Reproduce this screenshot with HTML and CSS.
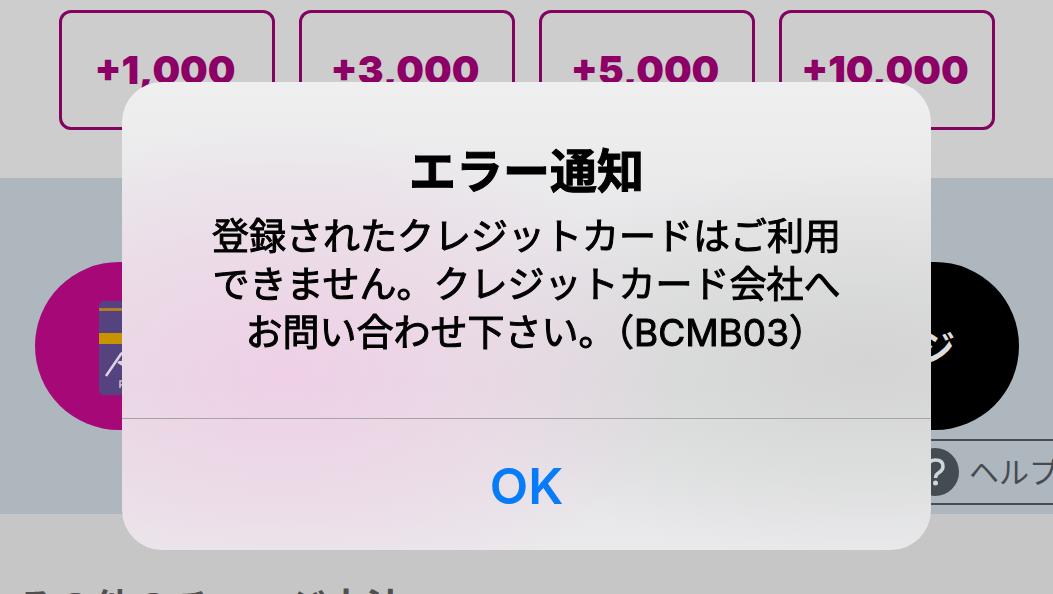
FILE: index.html
```
<!DOCTYPE html>
<html lang="ja">
<head>
    <meta charset="UTF-8">
    <meta name="viewport" content="width=device-width, initial-scale=1">
    <title>チャージ</title>
    <link rel="stylesheet" href="styles.css">
</head>
<body>
    <main>
        <section class="amounts">
            <button type="button">+1,000</button>
            <button type="button">+3,000</button>
            <button type="button">+5,000</button>
            <button type="button">+10,000</button>
        </section>
        <section class="charge">
            <div class="pills">
                <button type="button" class="pill card" aria-label="カード">
                    <svg width="148" height="94" viewBox="0 0 148 94">
                        <rect width="148" height="94" rx="5" fill="#55437f"/>
                        <rect y="7" width="148" height="3" fill="#b17d2c"/>
                        <rect y="32" width="148" height="11" fill="#c79400"/>
                        <path d="M7 75 L22 53 L28 49 M19 61 L24 64 M20 61 Q24 62 27 59" fill="none" stroke="#ded3e3" stroke-width="2.5"/>
                        <path d="M21 87 V80 H27 M21 84 H26" fill="none" stroke="#cfc3da" stroke-width="1.5"/>
                    </svg>
                </button>
                <button type="button" class="pill submit">チャージ</button>
            </div>
            <a href="#" class="help">
                <svg width="48" height="48" viewBox="0 0 48 48" aria-hidden="true">
                    <circle cx="24" cy="24" r="24" fill="#454c51"/>
                    <path d="M17 18 Q18 12 24.500 12 Q32 12 32 18.500 Q32 22 28 24.500 Q24.500 26.500 24.500 30" fill="none" stroke="#d0d6da" stroke-width="3.500"/>
                    <circle cx="24.500" cy="35" r="2.500" fill="#d0d6da"/>
                </svg>
                ヘルプ
            </a>
        </section>
        <h2>その他のチャージ方法</h2>
    </main>

    <div class="overlay">
        <div class="alert" role="alertdialog" aria-labelledby="alertTitle" aria-describedby="alertText">
            <div class="message">
                <h1 id="alertTitle">エラー通知</h1>
                <p id="alertText">登録されたクレジットカードはご利用<br>できません。クレジットカード会社へ<br>お問い合わせ下さい。（BCMB03<span class="half">）</span></p>
            </div>
            <button type="button" class="ok">OK</button>
        </div>
    </div>
</body>
</html>
```
FILE: styles.css
```
*{
    box-sizing: border-box;
}
body{
    margin: 0;
    height: 100vh;
    overflow: hidden;
    background: #c6c6c6;
    font-family: Inter, "Noto Sans CJK JP", sans-serif;
}
button{
    font-family: inherit;
    cursor: pointer;
}
.amounts{
    display: grid;
    grid-template-columns: repeat(4, 1fr);
    gap: 24px;
    padding: 10px 58px 48px 59px;
    background: #cdcdcd;
}
.amounts button{
    height: 120px;
    padding: 0 4px 2px 0;
    border: 3px solid #82045f;
    border-radius: 12px;
    background: transparent;
    color: #8d0066;
    font-size: 39px;
    font-weight: 900;
}
.charge{
    height: 336px;
    padding-top: 84px;
    background: #adb7bd;
}
.pills{
    display: grid;
    grid-template-columns: 1fr 1fr;
    gap: 24px;
    padding: 0 34px 0 35px;
}
.pill{
    display: flex;
    align-items: center;
    height: 168px;
    padding: 0 64px;
    border: none;
    border-radius: 84px;
}
.pill.card{
    padding-top: 4px;
    background: #a60877;
}
.pill.submit{
    justify-content: flex-end;
    background: #000;
    color: #ddd;
    font-size: 36px;
    font-weight: 700;
}
.help{
    display: flex;
    align-items: center;
    gap: 10px;
    width: 160px;
    height: 66px;
    margin: 9px 0 0 auto;
    padding-left: 18px;
    border: solid #454f53;
    border-width: 2px 0;
    color: #454c51;
    font-size: 30px;
    line-height: 40px;
    text-decoration: none;
    white-space: nowrap;
}
.help svg{
    flex: none;
}
h2{
    margin: 0;
    padding: 66px 16px 0;
    color: #505050;
    font-size: 39px;
    line-height: 56px;
}
.overlay{
    display: flex;
    justify-content: center;
    align-items: center;
    position: fixed;
    inset: 0;
    padding: 38px 122px 0;
}
.alert{
    width: 100%;
    overflow: hidden;
    border-radius: 40px;
    background:
        radial-gradient(ellipse 400px 250px at 20% 62%, rgba(241, 205, 231, 0.85), rgba(240, 210, 231, 0.6) 45%, rgba(240, 215, 232, 0)),
        radial-gradient(ellipse 420px 200px at 92% 60%, #d3d4d3, rgba(211, 212, 211, 0)),
        linear-gradient(#efeff0, #e6e6e8 40%, #e0e1e2 65%, #eaeaec);
    color: #000;
    text-align: center;
}
.message{
    padding: 61px 24px;
    border-bottom: 1px solid #a5a2a8;
}
.message h1{
    margin: 0 0 14px;
    font-size: 47px;
    line-height: 56px;
    -webkit-text-stroke: 1px;
}
.message p{
    margin: 0;
    font-size: 37px;
    font-weight: 400;
    line-height: 48px;
    -webkit-text-stroke: 1px;
}
.message .half{
    font-feature-settings: "halt";
}
.ok{
    display: block;
    width: 100%;
    height: 131px;
    padding: 2px 0 0;
    border: none;
    background: transparent;
    color: #087cf8;
    font-size: 50px;
    font-weight: 600;
}
```
